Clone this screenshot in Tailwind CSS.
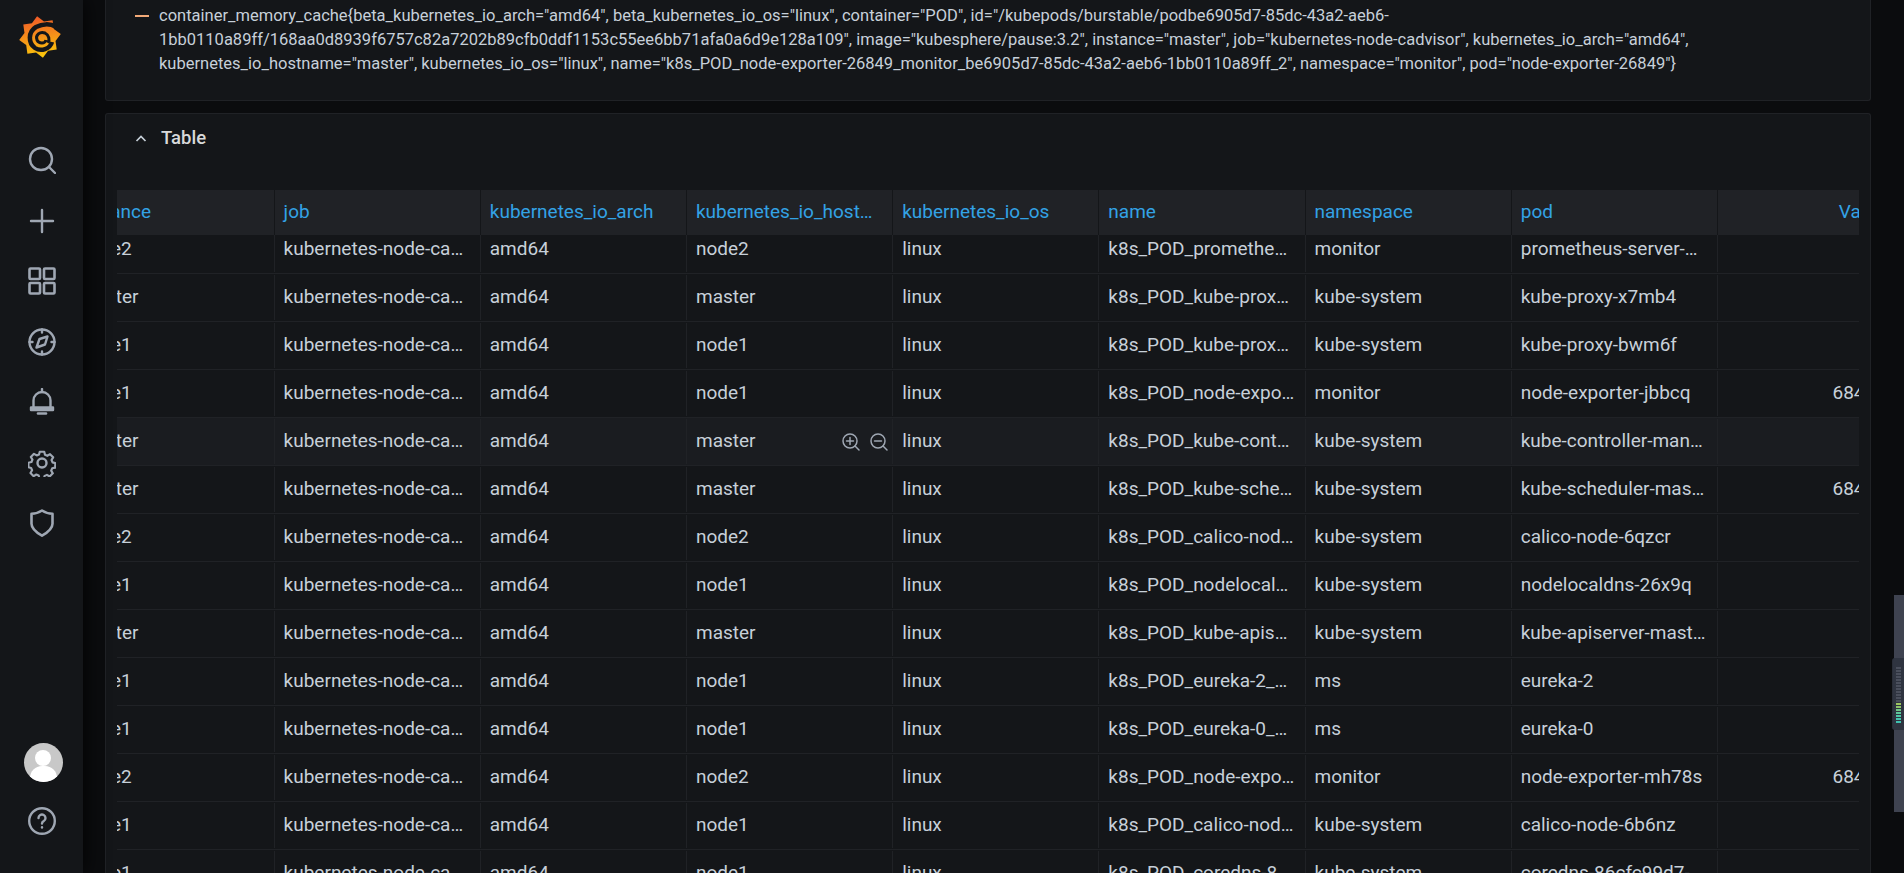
<!DOCTYPE html>
<html lang="en">
<head>
    <meta charset="UTF-8">
    <title>Grafana</title>
    <script src="https://cdn.jsdelivr.net/npm/@tailwindcss/browser@4"></script>
</head>
<body class="h-screen overflow-hidden bg-[#0b0c0e] font-['Roboto',sans-serif] text-[#c7d0d9]">
<div class="flex h-[873px]">
    <!-- Sidebar -->
    <nav class="relative z-10 flex h-full w-[83px] shrink-0 flex-col items-center bg-[#141619] pt-[15px] shadow-[0_0_20px_rgba(0,0,0,0.9)]">
        <svg class="ml-[-3px] h-[44px] w-[44px]" viewBox="0 0 44 44">
            <defs>
                <linearGradient id="logo" x1="0" y1="0" x2="0" y2="1">
                    <stop offset="0" stop-color="#f05a28"></stop>
                    <stop offset="1" stop-color="#fbca0a"></stop>
                </linearGradient>
            </defs>
            <polygon transform="rotate(-8 22 22)" fill="url(#logo)" points="22,1 28.1,7.2 36.8,7.2 36.8,15.9 43,22 36.8,28.1 36.8,36.8 28.1,36.8 22,43 15.9,36.8 7.2,36.8 7.2,28.1 1,22 7.2,15.9 7.2,7.2 15.9,7.2"></polygon>
            <path d="M38 12 C32 8 24 9 18 12 C10 17 10 28 17 33 C23 37 32 34 34 27" fill="none" stroke="#141619" stroke-width="4.500"></path>
            <path d="M28 25 C27 29 21 29 19 25 C17 20 22 16 27 18 C31 20 32 25 30 28" fill="none" stroke="#141619" stroke-width="3"></path>
        </svg>
        <div class="mt-[87px] flex flex-col items-center gap-[32.5px] text-[#9fa7b3]">
            <svg class="h-[28px] w-[28px]" viewBox="0 0 28 28" fill="none" stroke="currentColor" stroke-width="2.400" stroke-linecap="round"><circle cx="13" cy="13" r="11"></circle><path d="M21 21l6 6"></path></svg>
            <svg class="h-[28px] w-[28px]" viewBox="0 0 28 28" fill="none" stroke="currentColor" stroke-width="2.400" stroke-linecap="round"><path d="M14 3v22M3 14h22"></path></svg>
            <svg class="h-[28px] w-[28px]" viewBox="0 0 28 28" fill="none" stroke="currentColor" stroke-width="2.600" stroke-linejoin="round"><rect x="1.500" y="1.500" width="10.500" height="10.500" rx="1"></rect><rect x="16" y="1.500" width="10.500" height="10.500" rx="1"></rect><rect x="1.500" y="16" width="10.500" height="10.500" rx="1"></rect><rect x="16" y="16" width="10.500" height="10.500" rx="1"></rect></svg>
            <svg class="h-[28px] w-[28px]" viewBox="0 0 28 28" fill="none" stroke="currentColor" stroke-width="2.400" stroke-linecap="round" stroke-linejoin="round"><circle cx="14" cy="14" r="12.500"></circle><path d="M14 1.500v3M14 23.500v3M1.500 14h3M23.500 14h3"></path><path d="M19.500 8.500l-2.500 8-8.500 3 3-8.500z"></path></svg>
            <svg class="h-[28px] w-[28px]" viewBox="0 0 28 28" fill="none" stroke="currentColor" stroke-width="2.400" stroke-linecap="round" stroke-linejoin="round"><path d="M14 1v3"></path><path d="M5.500 19v-6.500a8.500 8.500 0 0 1 17 0V19"></path><path d="M3 19.500h22v2.500H3z"></path><path d="M10 25.500h8" stroke-width="2.600"></path></svg>
            <svg class="h-[28px] w-[28px]" viewBox="0 0 28 28" fill="none" stroke="currentColor" stroke-width="2.400" stroke-linejoin="round"><circle cx="14" cy="14" r="4.500"></circle><path d="M11.500 1.500h5l.8 3.400 2.600 1.100 3-1.800 3.500 3.500-1.800 3 1.100 2.600 3 .8v5l-3.400.8-1.100 2.600 1.800 3-3.500 3.500-3-1.800-2.600 1.100-.8 3h-5l-.8-3.400-2.600-1.100-3 1.800-3.500-3.500 1.800-3-1.100-2.600-3-.8v-5l3.400-.8 1.100-2.600-1.800-3 3.500-3.500 3 1.800 2.600-1.100z" transform="translate(1.400 1.400) scale(0.9)"></path></svg>
            <svg class="h-[28px] w-[28px]" viewBox="0 0 28 28" fill="none" stroke="currentColor" stroke-width="2.600" stroke-linejoin="round"><path d="M14 1.500c3 2 7 3.200 10.500 3.200v10c0 4.500-4.500 8.500-10.500 12-6-3.500-10.500-7.500-10.500-12v-10c3.500 0 7.500-1.200 10.500-3.200z"></path></svg>
        </div>
        <div class="mt-auto flex flex-col items-center pb-[38px]">
            <div class="relative ml-[4px] h-[39px] w-[39px] overflow-hidden rounded-full bg-[#c8c8c8]">
                <div class="absolute left-[11px] top-[7px] h-[16px] w-[16px] rounded-full bg-white"></div>
                <div class="absolute left-[6px] top-[23px] h-[24px] w-[27px] rounded-full bg-white"></div>
            </div>
            <svg class="mt-[25px] h-[28px] w-[28px] text-[#9fa7b3]" viewBox="0 0 28 28" fill="none" stroke="currentColor" stroke-width="2.400" stroke-linecap="round"><circle cx="14" cy="14" r="12.800"></circle><path d="M10.500 11a3.500 3.500 0 1 1 5.300 3c-1.200.7-1.800 1.300-1.800 2.500"></path><path d="M14 20.300v.2"></path></svg>
        </div>
    </nav>

    <!-- Main -->
    <main class="flex h-full min-w-0 flex-1 flex-col gap-[12px] overflow-hidden pl-[22px] pr-[33px]">
        <!-- Legend panel, scrolled past its top -->
        <section class="h-[101px] shrink-0 rounded-b-[3px] border-x border-b border-[#202226] bg-[#141619] pl-[29px] text-[16.500px] leading-[24px]">
            <div class="relative pl-[24px] pt-[4px]">
                <span class="absolute left-0 top-[15px] h-[2px] w-[14px] bg-[#f2a978]"></span>
                container_memory_cache{beta_kubernetes_io_arch="amd64", beta_kubernetes_io_os="linux", container="POD", id="/kubepods/burstable/podbe6905d7-85dc-43a2-aeb6-<br>
                1bb0110a89ff/168aa0d8939f6757c82a7202b89cfb0ddf1153c55ee6bb71afa0a6d9e128a109", image="kubesphere/pause:3.2", instance="master", job="kubernetes-node-cadvisor", kubernetes_io_arch="amd64",<br>
                kubernetes_io_hostname="master", kubernetes_io_os="linux", name="k8s_POD_node-exporter-26849_monitor_be6905d7-85dc-43a2-aeb6-1bb0110a89ff_2", namespace="monitor", pod="node-exporter-26849"}
            </div>
        </section>

        <!-- Table panel -->
        <section class="min-h-0 flex-1 rounded-t-[3px] border-x border-t border-[#202226] bg-[#141619] pl-[11px] pr-[11px] text-[19px]">
            <div class="flex h-[50px] items-center gap-[13px] pl-[17px]">
                <svg class="h-[14px] w-[14px] text-[#c7d0d9]" viewBox="0 0 14 14" fill="none" stroke="currentColor" stroke-width="1.700"><path d="M2.500 9L7 4.500 11.500 9"></path></svg>
                <span class="text-[18.500px] font-medium text-[#d8d9da]">Table</span>
            </div>
            <div class="mt-[26px] overflow-hidden">
                <div id="table" class="ml-[-47px] w-max"></div>
            </div>
        </section>
    </main>
</div>

<!-- Side widget overlapping the page edge -->
<div class="absolute right-0 top-[595px] flex h-[217px] w-[10px] flex-col items-end bg-[#3f4350]">
    <div class="mt-[63px] flex h-[72px] w-[12px] shrink-0 flex-col justify-end gap-px rounded-l-[3px] border-l border-[#2a2e38] bg-[#2f3440] px-[3px] py-[7px]">
        <i class="h-[2px] bg-[#4a4f5c]"></i><i class="h-[2px] bg-[#4a4f5c]"></i><i class="h-[2px] bg-[#4a4f5c]"></i><i class="h-[2px] bg-[#4a4f5c]"></i><i class="h-[2px] bg-[#4a4f5c]"></i><i class="h-[2px] bg-[#4a4f5c]"></i><i class="h-[2px] bg-[#4a4f5c]"></i><i class="h-[2px] bg-[#4a4f5c]"></i><i class="h-[2px] bg-[#4a4f5c]"></i><i class="h-[2px] bg-[#4a4f5c]"></i><i class="h-[2px] bg-[#4a4f5c]"></i><i class="h-[2px] bg-[#4a4f5c]"></i>
        <i class="h-[2px] bg-[#9dc45f]"></i><i class="h-[2px] bg-[#8cc46a]"></i><i class="h-[2px] bg-[#6fc585]"></i><i class="h-[2px] bg-[#5bc69a]"></i><i class="h-[2px] bg-[#4dc6a5]"></i><i class="h-[2px] bg-[#45c4ad]"></i><i class="h-[2px] bg-[#3fc2b0]"></i>
    </div>
</div>

<script>
    const instances = ['node2','master','node1','node1','master','master','node2','node1','master','node1','node1','node2','node1','node1'];
    const names = ['prometheus-server','kube-proxy','kube-proxy','node-exporter','kube-controller-manager','kube-scheduler','calico-node','nodelocaldns','kube-apiserver','eureka-2','eureka-0','node-exporter','calico-node','coredns-86cfc'];
    const pods = ['prometheus-server-5f7b9c6d8-x2v4k','kube-proxy-x7mb4','kube-proxy-bwm6f','node-exporter-jbbcq','kube-controller-manager-master','kube-scheduler-master','calico-node-6qzcr','nodelocaldns-26x9q','kube-apiserver-master','eureka-2','eureka-0','node-exporter-mh78s','calico-node-6b6nz','coredns-86cfc99d7-k4xzt'];
    const namespaces = ['monitor','kube-system','kube-system','monitor','kube-system','kube-system','kube-system','kube-system','kube-system','ms','ms','monitor','kube-system','kube-system'];
    const values = {3: '68403', 5: '68403', 11: '68403'};

    const headCell = 'h-full shrink-0 truncate border-r border-[#141619] pl-[9px] leading-[44px] text-[#33a2e5]';
    const bodyCell = 'flex h-full shrink-0 items-center border-r border-[#202226] pl-[9px] pr-[9px]';
    const text = 'min-w-0 flex-1 truncate';
    const zoomIcons = '<svg class="h-[20px] w-[20px] shrink-0 text-[#9fa7b3]" viewBox="0 0 20 20" fill="none" stroke="currentColor" stroke-width="1.500" stroke-linecap="round"><circle cx="9" cy="9" r="7"></circle><path d="M14 14l4 4M9 5.500v7M5.500 9h7"></path></svg><svg class="ml-[8px] mr-[-6px] h-[20px] w-[20px] shrink-0 text-[#9fa7b3]" viewBox="0 0 20 20" fill="none" stroke="currentColor" stroke-width="1.500" stroke-linecap="round"><circle cx="9" cy="9" r="7"></circle><path d="M14 14l4 4M5.500 9h7"></path></svg>';

    const widths = ['w-[204.600px]','w-[206.200px]','w-[206.200px]','w-[206.200px]','w-[206.200px]','w-[206.200px]','w-[206.200px]','w-[206.200px]','w-[178px]'];
    const heads = ['instance','job','kubernetes_io_arch','kubernetes_io_hostname','kubernetes_io_os','name','namespace','pod','Value'];

    let html = '<div class="relative z-10 flex h-[45px] bg-[#202226]">';
    heads.forEach((h, i) => {
        html += '<div class="' + headCell + ' ' + widths[i] + (i === 8 ? ' pr-[9px] text-right' : ' pr-[18px]') + '">' + h + '</div>';
    });
    html += '</div><div class="mt-[-9px]">';

    instances.forEach((inst, r) => {
        const cells = [inst, 'kubernetes-node-cadvisor', 'amd64', inst, 'linux', 'k8s_POD_' + names[r] + '_' + pods[r], namespaces[r], pods[r], values[r] || ''];
        html += '<div class="flex h-[48px] border-b border-[#202226] py-px ' + (r === 4 ? 'bg-[#1a1c20]' : '') + '">';
        cells.forEach((c, i) => {
            html += '<div class="' + bodyCell + ' ' + widths[i] + '"><span class="' + text + (i === 8 ? ' text-right' : '') + '">' + c + '</span>' + (r === 4 && i === 3 ? zoomIcons : '') + '</div>';
        });
        html += '</div>';
    });
    document.getElementById('table').innerHTML = html + '</div>';
</script>
</body>
</html>
